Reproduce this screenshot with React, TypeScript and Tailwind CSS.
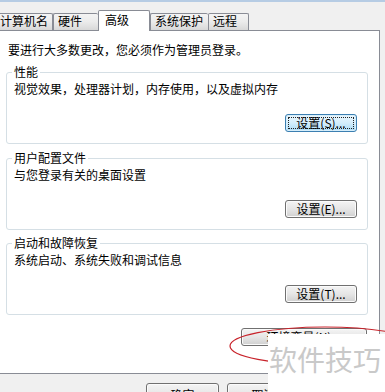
import clsx from "clsx";
import { ReactNode } from "react";

type BtnProps = {
  children: ReactNode;
  focused?: boolean;
  className?: string;
};

// win7 style push button
const Btn = ({ children, focused, className }: BtnProps) => {
  return (
    <div
      className={clsx(
        "flex shrink-0 items-stretch rounded-[3px] border p-[2px]",
        focused
          ? "border-[#3c7fb1] bg-linear-to-b from-[#eaf6fd] via-[#d4eefc] to-[#a9daf5] shadow-[inset_0_0_0_1px_#d6eefb]"
          : "border-[#707070] bg-linear-to-b from-[#f4f4f4] via-[#e6e6e6] to-[#d0d0d0] shadow-[inset_0_0_0_1px_#fbfbfb]",
        className
      )}
    >
      <div
        className={clsx(
          "flex flex-1 items-center justify-center border",
          focused ? "border-dotted border-[#222]" : "border-transparent"
        )}
      >
        {children}
      </div>
    </div>
  );
};

type GroupProps = {
  title: string;
  desc: string;
  button: ReactNode;
  className?: string;
};

const Group = ({ title, desc, button, className }: GroupProps) => {
  return (
    <fieldset
      className={clsx(
        "rounded-[3px] border border-[#d5dfe5] pb-[11px] pl-[7px] pr-[10px] pt-[3px]",
        className
      )}
    >
      <legend className="-ml-[2px] px-[2px]">{title}</legend>
      <div>{desc}</div>
      <div className="mt-[18px] flex justify-end">{button}</div>
    </fieldset>
  );
};

const tabBase =
  "h-[17px] mt-[3px] shrink-0 rounded-t-[2px] border-l border-t border-[#898c95] bg-linear-to-b from-[#f4f4f4] via-[#ebebeb] to-[#d8d8d8]";

export default function App() {
  return (
    <div className="relative h-[392px] w-[385px] overflow-hidden bg-[#f0f0f0] font-['Noto_Sans_CJK_SC','Noto_Sans',sans-serif] text-[12px] leading-[14px] text-black">
      <div className="h-[2px] bg-[#b6cce4]" />

      {/* tab strip */}
      <div className="relative z-10 -ml-[6px] mt-[8px] flex h-[21px] items-start">
        <div className={clsx(tabBase, "w-[59px] border-r pl-[5px]")}>计算机名</div>
        <div className={clsx(tabBase, "w-[45px] pl-[4px]")}>硬件</div>
        <div className="h-[21px] w-[52px] shrink-0 rounded-t-[2px] border-x border-t border-[#898c95] bg-white pl-[6px] pt-[2px]">
          高级
        </div>
        <div className={clsx(tabBase, "w-[58px] pl-[4px]")}>系统保护</div>
        <div className={clsx(tabBase, "w-[41px] border-r pl-[4px]")}>远程</div>
      </div>

      {/* tab page */}
      <div className="-ml-[4px] -mt-px h-[344px] w-[384px] border border-[#898c95] bg-white pl-[9px] pr-[11px] pt-[12px]">
        <div className="ml-[2px]">要进行大多数更改，您必须作为管理员登录。</div>

        <Group
          className="mt-[8px]"
          title="性能"
          desc="视觉效果，处理器计划，内存使用，以及虚拟内存"
          button={
            <Btn focused className="h-[18px] w-[72px]">
              设置(S)...
            </Btn>
          }
        />
        <Group
          className="mt-[7px]"
          title="用户配置文件"
          desc="与您登录有关的桌面设置"
          button={<Btn className="h-[18px] w-[72px]">设置(E)...</Btn>}
        />
        <Group
          className="mt-[6px]"
          title="启动和故障恢复"
          desc="系统启动、系统失败和调试信息"
          button={<Btn className="h-[18px] w-[72px]">设置(T)...</Btn>}
        />

        <div className="mr-[1px] mt-[13px] flex justify-end">
          <Btn className="h-[18px] w-[126px]">环境变量(N)...</Btn>
        </div>
      </div>

      {/* dialog buttons */}
      <div className="mt-[9px] flex gap-[8px] pl-[146px]">
        <Btn className="h-[23px] w-[73px]">确定</Btn>
        <Btn className="h-[23px] w-[73px]">取消</Btn>
      </div>

      {/* red annotation */}
      <svg
        className="pointer-events-none absolute inset-0"
        width="385"
        height="392"
        viewBox="0 0 385 392"
      >
        <ellipse
          cx="325"
          cy="346"
          rx="95"
          ry="19"
          fill="none"
          stroke="#c8232b"
          strokeWidth="1.2"
        />
      </svg>

      {/* watermark */}
      <div className="absolute left-[268px] top-[334px] h-[58px] w-[117px] bg-white pl-[1px] pt-[11px] text-[28px] leading-[28px] text-[#c9c9c9]">
        软件技巧
      </div>
    </div>
  );
}
